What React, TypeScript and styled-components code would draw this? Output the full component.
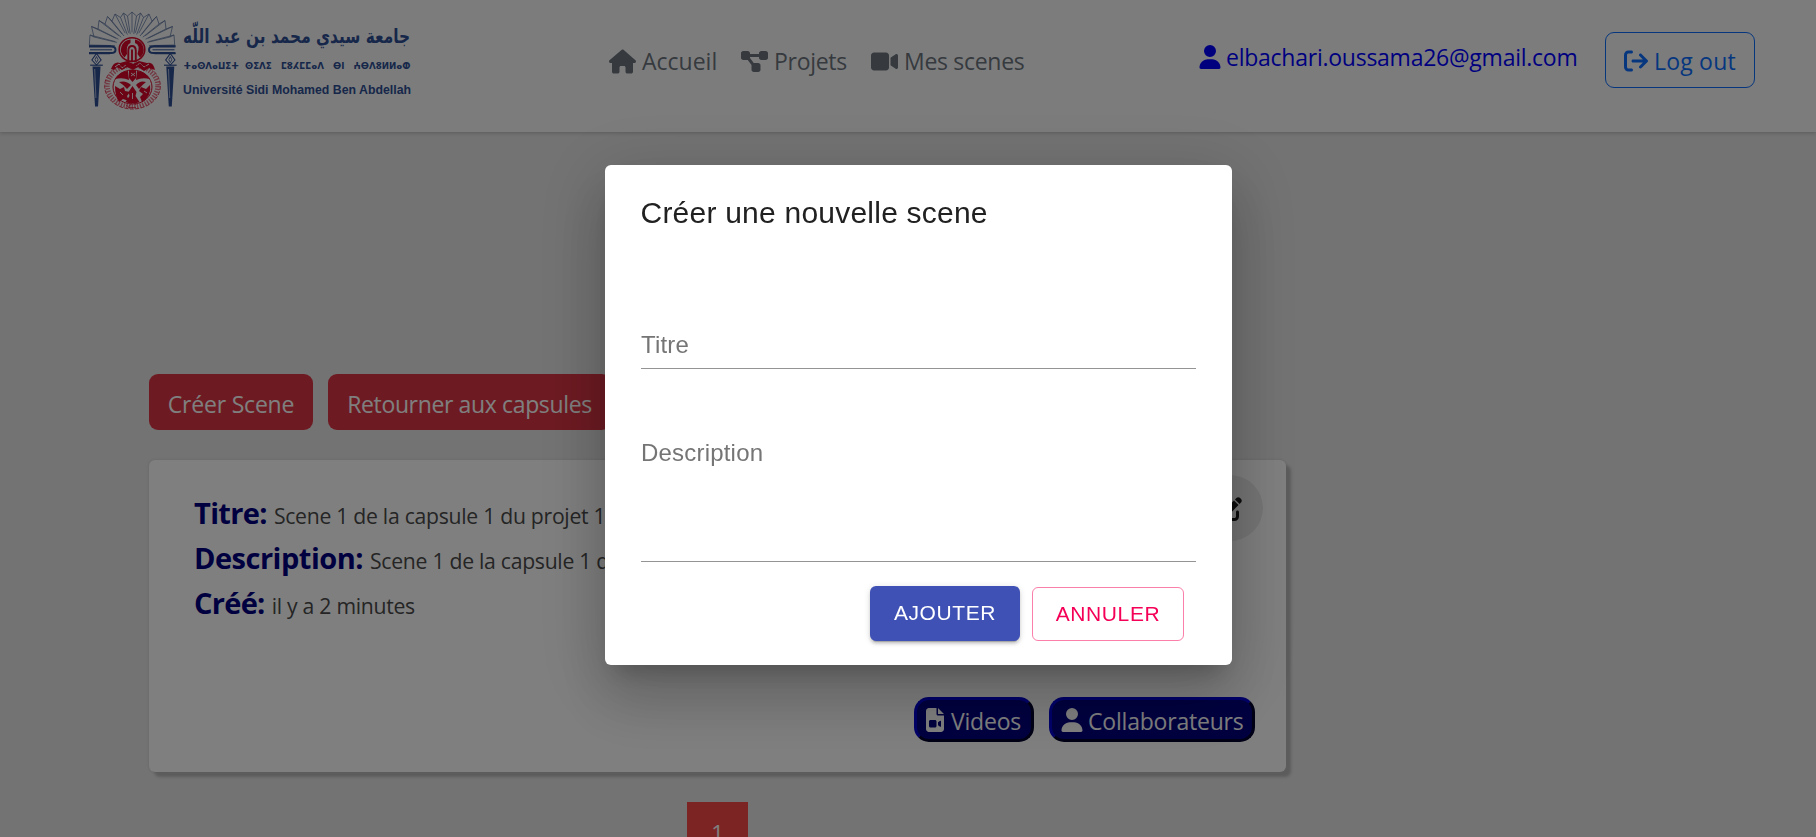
import React from "react";
import styled, { createGlobalStyle } from "styled-components";
import {
  FaHouse,
  FaDiagramProject,
  FaVideo,
  FaUser,
  FaArrowRightFromBracket,
  FaFileVideo,
  FaPenToSquare,
} from "react-icons/fa6";

const uiFont = `"Segoe UI", "Open Sans", "Noto Sans", sans-serif`;
const dialogFont = `"Liberation Sans", Arial, sans-serif`;

const GlobalStyle = createGlobalStyle`
  * { box-sizing: border-box; }
  html, body { margin: 0; height: 100%; overflow: hidden; }
  body { background: #e6e6e6; font-family: ${uiFont}; font-size: 23px; color: #212529; }
  svg { display: block; flex: none; overflow: visible; }
`;

const Page = styled.div`
  height: 837px;
  overflow: hidden;
  display: flex;
  flex-direction: column;
`;

const Header = styled.header`
  flex: none;
  height: 132px;
  display: flex;
  align-items: flex-start;
  padding-left: 84px;
  background: #f8f9fa;
  box-shadow: 0 1px 4px rgba(0, 0, 0, 0.22);
`;

const Nav = styled.nav`
  display: flex;
  margin: 44px 0 0 195px;
  height: 34px;
`;

const NavLink = styled.a<{ $width: number; $spacing: number }>`
  width: ${(p) => p.$width}px;
  display: flex;
  align-items: center;
  gap: 6px;
  color: #6c757d;
  line-height: 34px;
  letter-spacing: ${(p) => p.$spacing}px;
  white-space: nowrap;
`;

const Account = styled.a`
  display: flex;
  align-items: center;
  gap: 4px;
  width: 407px;
  height: 34px;
  margin: 40px 0 0 160px;
  color: #0000ff;
  letter-spacing: -0.25px;
  white-space: nowrap;
`;

const LogoutButton = styled.button`
  display: flex;
  align-items: center;
  gap: 6px;
  width: 150px;
  height: 56px;
  margin: 32px 0 0;
  padding: 2px 0 0 18px;
  border: 1px solid #0d6efd;
  border-radius: 9px;
  background: transparent;
  color: #0d6efd;
  font: 23px ${uiFont};
  letter-spacing: 0.2px;
  white-space: nowrap;
`;

const Main = styled.main`
  width: 1137px;
  margin: 242px 0 0 149px;
`;

const Actions = styled.div`
  display: flex;
  gap: 15px;
`;

const DangerButton = styled.button<{ $width: number; $spacing: number }>`
  width: ${(p) => p.$width}px;
  height: 56px;
  padding: 3px 0 0;
  border: 0;
  border-radius: 9px;
  background: #dc3545;
  color: #fff;
  font: 23px ${uiFont};
  letter-spacing: ${(p) => p.$spacing}px;
  white-space: nowrap;
`;

const Card = styled.section`
  display: flex;
  flex-direction: column;
  justify-content: space-between;
  height: 312px;
  margin-top: 30px;
  padding: 15px 31px 30px 45px;
  border-radius: 6px;
  background: #fff;
  box-shadow: 5px 5px 3px #b8b8b8, 0 0 3px rgba(0, 0, 0, 0.12);
`;

const CardTop = styled.div`
  display: flex;
  justify-content: space-between;
  margin-right: -8px;
`;

const Details = styled.div`
  padding-top: 15px;
`;

const Detail = styled.div`
  display: flex;
  align-items: baseline;
  gap: 7px;
  height: 45px;
  line-height: 45px;
  white-space: nowrap;
`;

const DetailLabel = styled.b<{ $spacing: number }>`
  font-size: 29px;
  font-weight: 700;
  color: #000080;
  letter-spacing: ${(p) => p.$spacing}px;
`;

const DetailValue = styled.span`
  font-size: 21.2px;
  color: #4a4a4a;
  letter-spacing: -0.28px;
`;

const EditButton = styled.button`
  display: flex;
  align-items: center;
  justify-content: center;
  width: 66px;
  height: 66px;
  padding: 2px 0 0;
  border: 0;
  border-radius: 50%;
  background: #ebebeb;
  color: #1a1a1a;
`;

const CardFooter = styled.div`
  display: flex;
  justify-content: flex-end;
  gap: 15px;
`;

const PillButton = styled.button<{ $width: number; $pad: number; $gap: number }>`
  display: flex;
  align-items: center;
  gap: ${(p) => p.$gap}px;
  width: ${(p) => p.$width}px;
  height: 45px;
  padding: 3px 0 0 ${(p) => p.$pad}px;
  border: 3px outset #000080;
  border-radius: 15px;
  background: #000080;
  color: #fff;
  font: 23px ${uiFont};
  letter-spacing: -0.2px;
  white-space: nowrap;

  svg { margin-top: -2px; }
`;

const PageNumber = styled.div`
  width: 61px;
  height: 61px;
  margin: 30px auto 0;
  background: #f84848;
  color: #fff;
  font-size: 22px;
  line-height: 61px;
  text-align: center;
`;

const Backdrop = styled.div`
  position: fixed;
  inset: 0;
  background: rgba(0, 0, 0, 0.5);
`;

const Dialog = styled.div`
  width: 627px;
  height: 500px;
  margin: 165px 0 0 605px;
  padding: 24px 36px 0;
  border-radius: 6px;
  background: #fff;
  box-shadow: 0 16px 22px -10px rgba(0, 0, 0, 0.2),
    0 36px 57px 4px rgba(0, 0, 0, 0.14), 0 13px 69px 12px rgba(0, 0, 0, 0.12);
  font-family: ${dialogFont};
`;

const DialogTitle = styled.h2`
  margin: 0 0 0 -0.5px;
  font-size: 30px;
  font-weight: 400;
  line-height: 48px;
  letter-spacing: 0.225px;
  color: #212121;
`;

const Field = styled.label<{ $top: number; $height: number }>`
  display: block;
  height: ${(p) => p.$height}px;
  margin-top: ${(p) => p.$top}px;
  border-bottom: 1px solid #949494;
  font-size: 24px;
  line-height: 28px;
  letter-spacing: 0.2px;
  color: #757575;
`;

const DialogActions = styled.div`
  display: flex;
  align-items: flex-end;
  gap: 12px;
  margin: 24px 12px 0 0;
  justify-content: flex-end;
`;

const DialogButton = styled.button<{ $primary?: boolean }>`
  width: ${(p) => (p.$primary ? 150 : 152)}px;
  height: ${(p) => (p.$primary ? 55 : 54)}px;
  padding: 0 0 1px;
  border: ${(p) => (p.$primary ? "0" : "1px solid rgba(245, 0, 87, 0.5)")};
  border-radius: 6px;
  background: ${(p) => (p.$primary ? "#3f51b5" : "transparent")};
  box-shadow: ${(p) =>
    p.$primary
      ? "0 4px 1px -3px rgba(0,0,0,.2), 0 3px 3px rgba(0,0,0,.14), 0 1px 7px rgba(0,0,0,.12)"
      : "none"};
  color: ${(p) => (p.$primary ? "#fff" : "#f50057")};
  font: 500 21px ${dialogFont};
  letter-spacing: 0.6px;
  text-transform: uppercase;
`;

const blue = "#2e4f94";
const red = "#d9082a";

const leftFan = [
  [5.3, 39], [6, 29], [10, 31], [7.5, 20.5], [14, 23], [15, 14.5], [21, 18],
  [23.5, 10.5], [28, 15], [31, 8], [36.5, 11.5], [39.5, 7], [43.5, 10],
];
const fan = [
  ...leftFan,
  [48, 6],
  ...leftFan.map(([x, y]) => [96 - x, y]).reverse(),
];

const Torch = ({ x }: { x: number }) => (
  <g transform={`translate(${x} 0)`}>
    <path d="M0 47.5 4.600 54 0 59-4.600 54Z" fill="none" stroke={blue} strokeWidth="1.100" />
    <path d="M0 50.500q-3 3.500 0 6q3-2.500 0-6" fill="none" stroke={blue} strokeWidth=".8" />
    <path d="M-6.300 59.200H6.300" stroke={blue} strokeWidth="1.200" />
    <path d="M-4 60.500H4L1.500 100.500H-1.500Z" fill={blue} />
    <path d="M-1.800 63-.6 92" stroke="#dfe3ee" strokeWidth=".7" />
  </g>
);

const Book = ({ flip }: { flip?: boolean }) => (
  <g transform={flip ? "translate(96.500 0) scale(-1 1)" : undefined} stroke={blue} fill="none">
    <path d="M5 40.500H27q4.500 0 4.500 3.300t-4.500 3.300H5" strokeWidth="2" />
    <path d="M6 43.800H28" strokeWidth="1" />
    <path d="M5 39.800H27M5 47.600H26" strokeWidth="1.200" />
  </g>
);

const Logo = () => (
  <svg width="330" height="120" viewBox="0 -6 330 120">
    <g fill="none" stroke="#5f769f" strokeWidth=".75">
      <polyline points={fan.map((p) => p.join(",")).join(" ")} />
      {fan.map(([x, y], i) => (
        <path key={i} d={`M${x} ${y}L${48 + (x - 48) * 0.4} ${40 + (y - 40) * 0.4}`} />
      ))}
    </g>
    <Book />
    <Book flip />
    <Torch x={12.5} />
    <Torch x={86.3} />

    <ellipse cx="48" cy="43.500" rx="12.800" ry="11.800" fill="#f8f9fa" stroke={red} strokeWidth="1.600" />
    <path d="M46.500 33.500A10.500 10.300 0 0 0 40.500 51.500L43 48Q42 38.500 46.500 37Z" fill={red} />
    <path d="M51 33.500A10.500 10.300 0 0 1 56 51.500L53.500 48Q56.500 38.500 51 37Z" fill={red} />
    <path d="M44.300 56V44.500Q44.500 40 48 40T51.800 44.500V56M48 43.500V56" fill="none" stroke={red} strokeWidth="1.900" />

    <path d="M27 63q3-8 9-6l7-2 6 3 6-3 8 2q6-2 8 7l-6-2-5 3-6-4-5 3-6-3-5 3-5-3-3 3Z" fill={red} />
    <path d="M31 61l4-3 3 4 4-3M52 60l4-3 4 4 5-3" stroke="#f8f9fa" fill="none" />
    <ellipse cx="48.500" cy="80" rx="25" ry="20.500" fill="none" stroke={red} strokeWidth="4.500" strokeDasharray="1.400 1.300" opacity=".55" />
    <ellipse cx="48.500" cy="80" rx="27.800" ry="23" fill="none" stroke={red} strokeWidth=".8" strokeDasharray="4 1.500" />
    <ellipse cx="48.500" cy="81" rx="19.500" ry="17" fill="#f8f9fa" stroke={red} strokeWidth="1" />
    <g fill={red}>
      <path d="M31 73Q36 65 44 65l1 9q-6-3-14-1ZM66 73Q61 65 53 65l-1 9q6-3 14-1Z" />
      <path d="M45 64h7v8l-3.500 4-3.500-4Z" />
      <path d="M35 76q7-2 12 3l-4 4q-3-4-8-7ZM62 76q-6-2-10 3l3 4q3-4 7-7Z" />
      <path d="M31 80l5 3 4-2 1 4 5 1-3 4 2 5-6-2-4 3Q31 90 31 80Z" />
      <path d="M66 79l-4 4-5-2-2 4 4 3-3 3 2 5Q68 90 66 79Z" />
      <path d="M48.500 80l4 6-1 4 4 6q-7 3-14 0l4-6-1-4Z" />
    </g>
    <path d="M47 67l4 3M51 67l-4 3M36 86l3 3M60 85l3 2M48.500 87v6" stroke="#f8f9fa" strokeWidth=".9" fill="none" />
    <path d="M42 99q3 3 5-1t5 1M44 101.500h8" fill="none" stroke={red} strokeWidth=".9" opacity=".7" />

    <text x="326" y="37" direction="rtl" textLength="227" lengthAdjust="spacingAndGlyphs" fontFamily='"DejaVu Sans", sans-serif' fontWeight="700" fontSize="20" fill={blue}>
      جامعة سيدي محمد بن عبد اللّه
    </text>
    <text x="99.500" y="63" textLength="227" lengthAdjust="spacingAndGlyphs" xmlSpace="preserve" fontFamily='"DejaVu Sans", sans-serif' fontWeight="700" fontSize="9.800" fill={blue}>
      {"ⵜⴰⵙⴷⴰⵡⵉⵜ\u00a0\u00a0ⵙⵉⴷⵉ\u00a0\u00a0\u00a0ⵎⵓⵃⵎⵎⴰⴷ\u00a0\u00a0\u00a0ⴱⵏ\u00a0\u00a0\u00a0ⵄⴱⴷⵓⵍⵍⴰⵀ"}
    </text>
    <text x="99" y="87.500" textLength="228" lengthAdjust="spacingAndGlyphs" fontFamily='"Liberation Sans", Arial, sans-serif' fontWeight="700" fontSize="12.500" fill={blue}>
      Université Sidi Mohamed Ben Abdellah
    </text>
  </svg>
);

const details = [
  { label: "Titre:", value: "Scene 1 de la capsule 1 du projet 1", spacing: -0.65 },
  { label: "Description:", value: "Scene 1 de la capsule 1 du projet 1", spacing: -0.5 },
  { label: "Créé:", value: "il y a 2 minutes", spacing: -0.7 },
];

export default function App() {
  return (
    <>
      <GlobalStyle />
      <Page>
        <Header>
          <Logo />
          <Nav>
            <NavLink $width={132} $spacing={0}>
              <FaHouse size={27} />
              Accueil
            </NavLink>
            <NavLink $width={130} $spacing={-0.3}>
              <FaDiagramProject size={27} />
              Projets
            </NavLink>
            <NavLink $width={167} $spacing={-0.3}>
              <FaVideo size={27} />
              Mes scenes
            </NavLink>
          </Nav>
          <Account>
            <FaUser size={24} />
            elbachari.oussama26@gmail.com
          </Account>
          <LogoutButton>
            <FaArrowRightFromBracket size={24} />
            Log out
          </LogoutButton>
        </Header>
        <Main>
          <Actions>
            <DangerButton $width={164} $spacing={-0.2}>Créer Scene</DangerButton>
            <DangerButton $width={283} $spacing={-0.36}>Retourner aux capsules</DangerButton>
          </Actions>
          <Card>
            <CardTop>
              <Details>
                {details.map((d) => (
                  <Detail key={d.label}>
                    <DetailLabel $spacing={d.spacing}>{d.label}</DetailLabel>
                    <DetailValue>{d.value}</DetailValue>
                  </Detail>
                ))}
              </Details>
              <EditButton aria-label="Modifier">
                <FaPenToSquare size={24} />
              </EditButton>
            </CardTop>
            <CardFooter>
              <PillButton $width={120} $pad={6} $gap={4}>
                <FaFileVideo size={24} />
                Videos
              </PillButton>
              <PillButton $width={206} $pad={7.5} $gap={4.5}>
                <FaUser size={24} />
                Collaborateurs
              </PillButton>
            </CardFooter>
          </Card>
          <PageNumber>1</PageNumber>
        </Main>
      </Page>
      <Backdrop>
        <Dialog role="dialog">
          <DialogTitle>Créer une nouvelle scene</DialogTitle>
          <Field $top={94} $height={38}>Titre</Field>
          <Field $top={70} $height={123}>Description</Field>
          <DialogActions>
            <DialogButton $primary>Ajouter</DialogButton>
            <DialogButton>Annuler</DialogButton>
          </DialogActions>
        </Dialog>
      </Backdrop>
    </>
  );
}
